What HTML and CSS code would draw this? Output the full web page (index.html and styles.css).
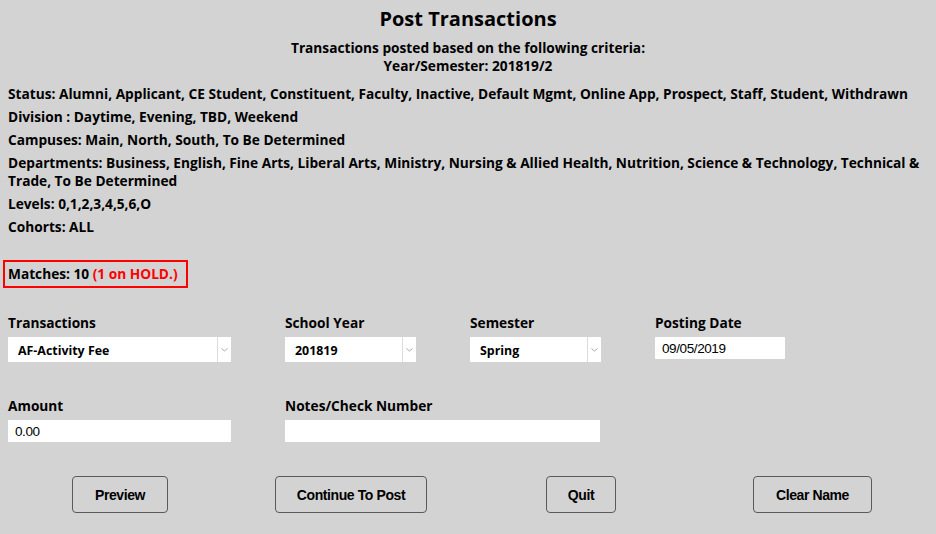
FILE: index.html
```html
<!DOCTYPE html>
<html lang="en">
<head>
    <meta charset="UTF-8">
    <title>Post Transactions</title>
    <link rel="stylesheet" href="styles.css">
</head>
<body>
    <div class="page">
        <h1>Post Transactions</h1>
        <div class="criteria-head">
            Transactions posted based on the following criteria:<br>
            Year/Semester: 201819/2
        </div>

        <p class="crit">Status: Alumni, Applicant, CE Student, Constituent, Faculty, Inactive, Default Mgmt, Online App, Prospect, Staff, Student, Withdrawn</p>
        <p class="crit">Division : Daytime, Evening, TBD, Weekend</p>
        <p class="crit">Campuses: Main, North, South, To Be Determined</p>
        <p class="crit">Departments: Business, English, Fine Arts, Liberal Arts, Ministry, Nursing &amp; Allied Health, Nutrition, Science &amp; Technology, Technical &amp; Trade, To Be Determined</p>
        <p class="crit">Levels: 0,1,2,3,4,5,6,O</p>
        <p class="crit">Cohorts: ALL</p>

        <div class="matches">Matches: 10 <span class="hold">(1 on HOLD.)</span></div>

        <div class="fields row-one">
            <div class="field">
                <label>Transactions</label>
                <div class="select wide">
                    <span class="value">AF-Activity Fee</span>
                    <span class="arrow"><svg width="7" height="4" viewBox="0 0 7 4"><path d="M0.5 0.5 L3.5 3 L6.5 0.5" fill="none" stroke="#a8a8a8" stroke-width="1"/></svg></span>
                </div>
            </div>
            <div class="field">
                <label>School Year</label>
                <div class="select">
                    <span class="value">201819</span>
                    <span class="arrow"><svg width="7" height="4" viewBox="0 0 7 4"><path d="M0.5 0.5 L3.5 3 L6.5 0.5" fill="none" stroke="#a8a8a8" stroke-width="1"/></svg></span>
                </div>
            </div>
            <div class="field">
                <label>Semester</label>
                <div class="select">
                    <span class="value">Spring</span>
                    <span class="arrow"><svg width="7" height="4" viewBox="0 0 7 4"><path d="M0.5 0.5 L3.5 3 L6.5 0.5" fill="none" stroke="#a8a8a8" stroke-width="1"/></svg></span>
                </div>
            </div>
            <div class="field">
                <label for="posting-date">Posting Date</label>
                <input type="text" id="posting-date" class="date" value="09/05/2019">
            </div>
        </div>

        <div class="fields row-two">
            <div class="field">
                <label for="amount">Amount</label>
                <input type="text" id="amount" class="amount" value="0.00">
            </div>
            <div class="field notes">
                <label for="notes">Notes/Check Number</label>
                <input type="text" id="notes" class="notes-input" value="">
            </div>
        </div>

        <div class="buttons">
            <button class="btn-preview">Preview</button>
            <button class="btn-post">Continue To Post</button>
            <button class="btn-quit">Quit</button>
            <button class="btn-clear">Clear Name</button>
        </div>
    </div>
</body>
</html>
```

FILE: styles.css
```css
body {
    margin: 0;
    padding: 0 8px;
    background-color: #d3d3d3;
    color: #000;
    font-family: "Open Sans", Lato, sans-serif;
    font-weight: bold;
    font-size: 13.7px;
}
h1 {
    margin: 7px 0 0;
    font-size: 20px;
    line-height: 24px;
    text-align: center;
}
.criteria-head {
    margin-top: 8px;
    line-height: 18px;
    text-align: center;
}
.crit {
    margin: 0 0 5px;
    line-height: 18px;
}
.criteria-head + .crit {
    margin-top: 10px;
}
.matches {
    display: inline-block;
    margin: 19px 0 0 -5px;
    padding: 3px 8px 3px 3px;
    line-height: 18px;
    border: 2px solid #f00;
}
.hold {
    color: #f00;
}
.fields {
    display: grid;
    grid-template-columns: 277px 185px 185px 1fr;
}
.row-one {
    margin-top: 26px;
}
.row-two {
    margin-top: 35px;
}
.field label {
    display: block;
    line-height: 18px;
    margin-bottom: 5px;
}
.notes {
    grid-column: 2 / 4;
}
.select {
    display: flex;
    width: 131px;
    height: 25px;
    background-color: #fff;
    font-size: 12.4px;
}
.select.wide {
    width: 223px;
}
.select .value {
    flex: 1;
    padding-left: 10px;
    line-height: 28px;
}
.select .arrow {
    display: flex;
    align-items: center;
    justify-content: center;
    width: 13px;
    border-left: 1px solid #dcdcdc;
}
input {
    display: block;
    height: 22px;
    padding: 0 7px;
    border: none;
    box-sizing: border-box;
    background-color: #fff;
    font-family: "Liberation Sans", Arial, sans-serif;
    font-size: 13.5px;
    letter-spacing: -0.4px;
    color: #000;
}
.date {
    width: 130px;
}
.amount {
    width: 223px;
}
.notes-input {
    width: 315px;
}
.buttons {
    display: flex;
    margin-top: 34px;
}
button {
    height: 37px;
    padding: 0;
    border: 1px solid #5a5a5a;
    border-radius: 4px;
    background-color: transparent;
    color: #000;
    font-family: "Liberation Sans", Arial, sans-serif;
    font-weight: bold;
    font-size: 14px;
    letter-spacing: -0.4px;
    cursor: pointer;
}
.btn-preview {
    width: 96px;
    margin-left: 64px;
}
.btn-post {
    width: 152px;
    margin-left: 107px;
}
.btn-quit {
    width: 70px;
    margin-left: 119px;
}
.btn-clear {
    width: 119px;
    margin-left: 137px;
}
```
